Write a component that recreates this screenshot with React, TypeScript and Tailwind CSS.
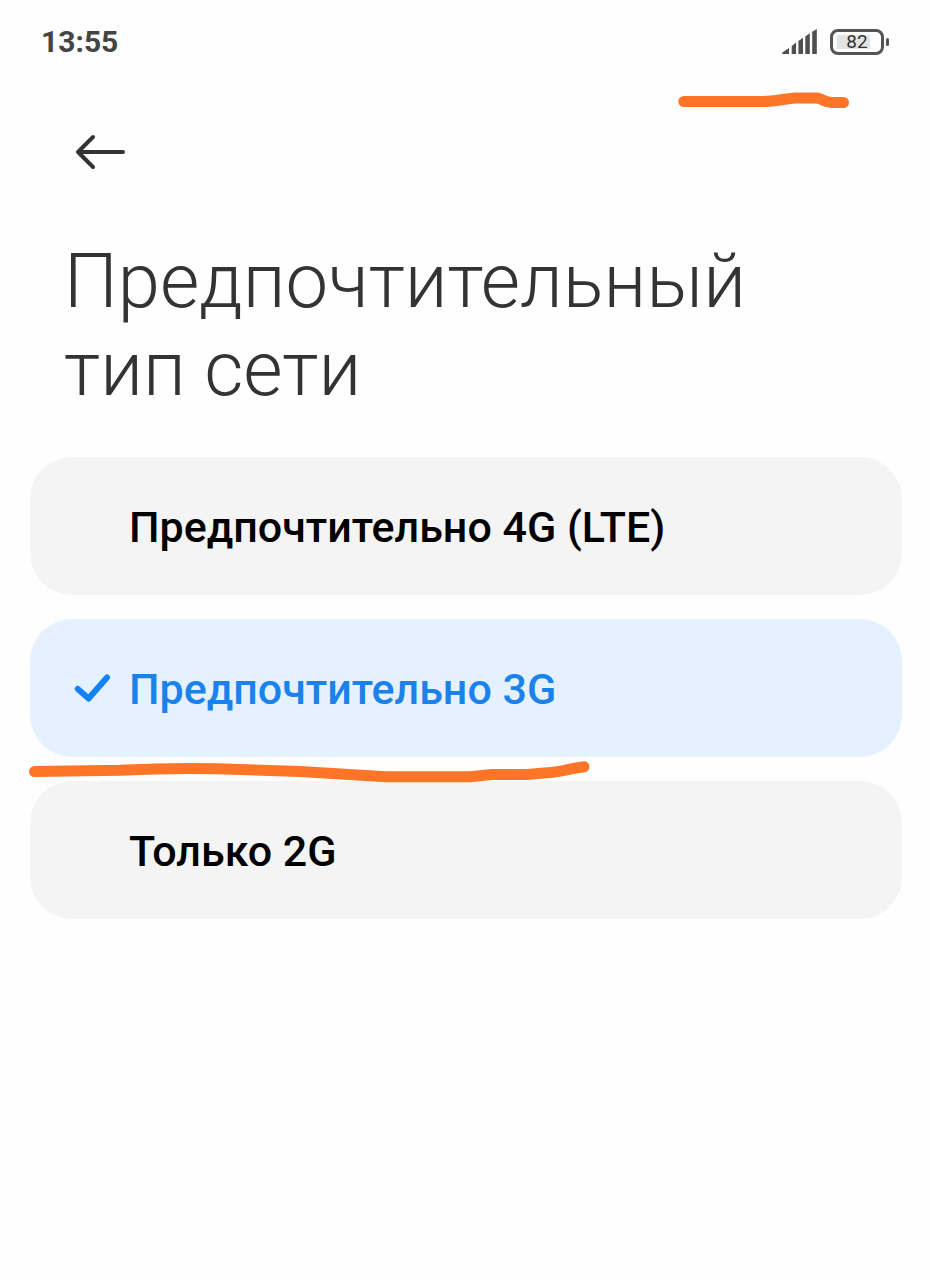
import { useState } from "react";

const BATTERY_LEVEL = 82;

const networkTypes = [
	{ id: "lte", label: "Предпочтительно 4G (LTE)" },
	{ id: "3g", label: "Предпочтительно 3G", underlined: true },
	{ id: "2g", label: "Только 2G" },
];

function SignalIcon() {
	return (
		<svg width="35" height="26" viewBox="0 0 35 26" fill="#4f4f4f" aria-hidden="true">
			<path d="M0.3 25V23.5L7 18.9V25Z" />
			<path d="M9.7 25V16.9L14.1 13.6V25Z" />
			<path d="M16.4 25V12L21 8.8V25Z" />
			<path d="M23.3 25V7.4L27.8 4.2V25Z" />
			<path d="M30.2 25V2.8L34.8 0V25Z" />
		</svg>
	);
}

function Battery({ level }: { level: number }) {
	return (
		<div className="flex items-center gap-0.5">
			<div className="relative flex h-[26px] w-[54px] items-center justify-center rounded-lg border-[3px] border-[#545454]">
				<div className="absolute inset-x-1 inset-y-[3px]">
					<div className="h-full bg-[#e4e4e4]" style={{ width: `${level}%` }} />
				</div>
				<span className="relative text-[19px] leading-5 text-[#333]">{level}</span>
			</div>
			<div className="h-2 w-[3px] rounded-sm bg-[#545454]" />
		</div>
	);
}

function StatusBar() {
	return (
		<div className="relative flex h-[84px] items-center justify-between px-[41px]">
			<time className="text-[30px] leading-8 font-bold text-[#444]">13:55</time>
			<div className="flex items-center gap-[13px]">
				<SignalIcon />
				<Battery level={BATTERY_LEVEL} />
			</div>
			<svg
				className="absolute top-[92px] right-20"
				width="172"
				height="18"
				viewBox="0 0 172 18"
				fill="none"
				stroke="#ff7528"
				strokeWidth="11"
				strokeLinecap="round"
				strokeLinejoin="round"
				aria-hidden="true"
			>
				<path d="M5.8 9.5H85C98 9.5 104 7 117 6H139C145 7 147 10.5 154 10.5H165.5" />
			</svg>
		</div>
	);
}

function Underline() {
	return (
		<svg
			className="pointer-events-none absolute top-[141px] -left-0.5 z-10"
			width="564"
			height="24"
			viewBox="0 0 564 24"
			fill="none"
			stroke="#ff7528"
			strokeWidth="11"
			strokeLinecap="round"
			strokeLinejoin="round"
			aria-hidden="true"
		>
			<path d="M6.5 11.5L92 10.3C124 8.6 160 8 190 8.8L272 11.5L358 16.7H442L464 14.6H499L525 12.3C535 11 546 7.8 556 6.7" />
		</svg>
	);
}

export default function App() {
	const [selected, setSelected] = useState("3g");

	return (
		<main className="min-h-screen bg-[#fefefe] font-[Roboto,sans-serif]">
			<StatusBar />

			<header className="px-16 pt-11">
				<button type="button" aria-label="Назад" className="flex h-12 items-center px-[11px]">
					<svg
						width="50"
						height="36"
						viewBox="0 0 50 36"
						fill="none"
						stroke="#333"
						strokeWidth="4"
						strokeLinecap="round"
						strokeLinejoin="round"
						aria-hidden="true"
					>
						<path d="M48 18H3M18 3L3 18L18 33" />
					</svg>
				</button>
				<h1
					id="network-type-title"
					className="mt-[61px] max-w-[760px] text-[76px] leading-[88px] font-light text-[#333]"
				>
					Предпочтительный тип сети
				</h1>
			</header>

			<div
				role="radiogroup"
				aria-labelledby="network-type-title"
				className="mt-11 flex flex-col gap-6 pr-7 pl-[30px]"
			>
				{networkTypes.map((type) => {
					const active = type.id === selected;
					return (
						<div key={type.id} className="relative">
							<label
								className={`flex h-[138px] cursor-pointer items-center rounded-[42px] pt-0.5 pl-11 text-[43px] leading-[52px] font-medium ${
									active ? "bg-[#e5f1ff] text-[#1a82ea]" : "bg-[#f4f4f4] text-black"
								}`}
							>
								<input
									type="radio"
									name="network-type"
									value={type.id}
									checked={active}
									onChange={() => setSelected(type.id)}
									className="sr-only"
								/>
								<span className="w-[55px]">
									{active && (
										<svg
											width="37"
											height="30"
											viewBox="0 0 37 30"
											fill="none"
											stroke="#1481f5"
											strokeWidth="6"
											strokeLinecap="round"
											strokeLinejoin="round"
											aria-hidden="true"
										>
											<path d="M3.8 15L14.6 24.5L33 3.5" />
										</svg>
									)}
								</span>
								{type.label}
							</label>
							{type.underlined && <Underline />}
						</div>
					);
				})}
			</div>
		</main>
	);
}
